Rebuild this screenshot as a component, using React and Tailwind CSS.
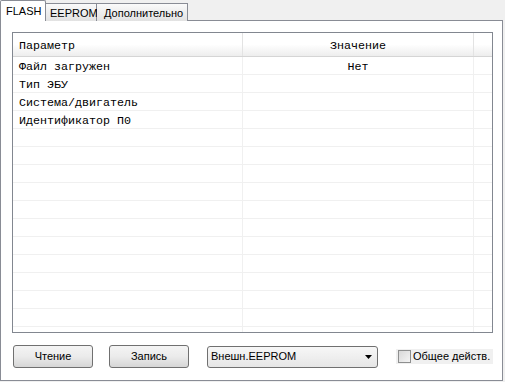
import React from "react";

const rows = [
  ["Файл загружен", "Нет"],
  ["Тип ЭБУ", ""],
  ["Система/двигатель", ""],
  ["Идентификатор П0", ""],
];

export default function App() {
  const allRows = [...rows];
  while (allRows.length < 16) allRows.push(["", ""]);
  const sans = { fontFamily: '"Liberation Sans", Arial, sans-serif' };
  const mono = { fontFamily: '"Liberation Mono", "Courier New", monospace' };
  return (
    <div className="w-[505px] h-[382px] bg-[#f0f0f0] flex flex-col overflow-hidden" style={sans}>
      {/* tabs */}
      <div className="flex items-end h-[21px] relative z-10">
        <div className="w-[46px] h-[21px] bg-white border border-b-0 border-[#898c95] rounded-t-[2px] text-[11px] text-black pl-[5px] pt-[3px] leading-[14px]">
          FLASH
        </div>
        <div className="w-[51px] h-[18px] bg-gradient-to-b from-[#fafafa] to-[#e2e2e2] border border-l-0 border-b-0 border-[#898c95] text-[11px] text-black pl-[4px] pt-[2px] leading-[14px]">
          EEPROM
        </div>
        <div className="w-[91px] h-[18px] bg-gradient-to-b from-[#fafafa] to-[#e2e2e2] border border-l-0 border-b-0 border-[#898c95] text-[11px] text-black pl-[7px] pt-[2px] leading-[14px]">
          Дополнительно
        </div>
      </div>
      {/* panel */}
      <div className="w-[503px] h-[361px] -mt-px bg-white border border-[#898c95] pl-[11px] pt-[11px] flex flex-col">
        <div className="w-[481px] h-[301px] border border-[#828790] bg-white overflow-hidden flex flex-col">
          <div className="flex h-[24px] shrink-0 bg-gradient-to-b from-white via-white to-[#ededed] border-b border-[#d5d5d5] text-[11.67px] leading-[13px] text-black" style={mono}>
            <div className="w-[230px] border-r border-[#e3e3e3] pl-[6px] pt-[7px]">Параметр</div>
            <div className="w-[231px] border-r border-[#e3e3e3] pt-[7px] text-center">Значение</div>
            <div className="flex-1" />
          </div>
          {allRows.map((r, i) => (
            <div key={i} className="flex h-[18px] shrink-0 border-b border-[#f0f0f0] text-[11.67px] leading-[13px] text-black" style={mono}>
              <div className="w-[230px] border-r border-[#f0f0f0] pl-[6px] pt-[4px] whitespace-nowrap">{r[0]}</div>
              <div className="w-[231px] border-r border-[#f0f0f0] pt-[4px] text-center">{r[1]}</div>
              <div className="flex-1" />
            </div>
          ))}
        </div>
        {/* bottom controls */}
        <div className="flex items-center mt-[12px] h-[23px]">
          <div className="ml-px w-[80px] h-[23px] rounded-[3px] border border-[#707070] bg-gradient-to-b from-[#f4f4f4] via-[#ebebeb] to-[#d6d6d6] text-[11px] text-black flex items-center justify-center">
            Чтение
          </div>
          <div className="ml-[16px] w-[80px] h-[23px] rounded-[3px] border border-[#707070] bg-gradient-to-b from-[#f4f4f4] via-[#ebebeb] to-[#d6d6d6] text-[11px] text-black flex items-center justify-center">
            Запись
          </div>
          <div className="ml-[18px] w-[171px] h-[22px] rounded-[3px] border border-[#707070] bg-gradient-to-b from-[#f7f7f7] to-[#e6e6e6] text-[11px] text-black flex items-center pl-[3px] pr-[4px]">
            <span className="flex-1">Внешн.EEPROM</span>
            <svg width="7" height="4" viewBox="0 0 7 4" className="mr-[1px]">
              <path d="M0 0h7L3.5 4z" fill="#000" />
            </svg>
          </div>
          <div className="ml-[18px] h-[15px] bg-[#f0f0f0] flex items-center pl-[2px] pr-[3px] text-[11px] text-black">
            <div className="w-[13px] h-[13px] border border-[#8e8f8f] bg-gradient-to-br from-[#d8d8d8] to-[#f4f4f4] mr-[2px]" />
            Общее действ.
          </div>
        </div>
      </div>
    </div>
  );
}
